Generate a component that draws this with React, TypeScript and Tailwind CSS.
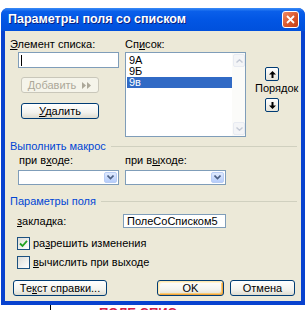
import type { ReactNode } from "react";

function Btn({
  children,
  className = "",
  disabled,
  isDefault,
}: {
  children: ReactNode;
  className?: string;
  disabled?: boolean;
  isDefault?: boolean;
}) {
  return (
    <div
      className={
        "flex items-center justify-center rounded-[3px] border " +
        (disabled
          ? "border-[#c9c7ba] bg-[#f5f4ea] text-[#aca899] "
          : "border-[#003c74] bg-[linear-gradient(to_bottom,#ffffff,#f3f3ee_60%,#dedcd0)] text-black ") +
        (isDefault
          ? "shadow-[inset_1px_1px_0_#fde7b0,inset_-1px_-1px_0_#f0a43c,inset_2px_2px_0_#fff3d4,inset_-2px_-2px_0_#f8cb78] "
          : "") +
        className
      }
    >
      {children}
    </div>
  );
}

function OrderButton({ down }: { down?: boolean }) {
  return (
    <div className="flex h-[14px] w-[14px] items-center justify-center rounded-[2px] border border-[#003c74] bg-[linear-gradient(to_bottom,#ffffff,#e6e4da)]">
      <svg width="7" height="7" viewBox="0 0 7 7" className={down ? "rotate-180" : ""}>
        <path d="M3.5 0 L7 3.5 L4.5 3.5 L4.5 7 L2.5 7 L2.5 3.5 L0 3.5 Z" fill="#000" />
      </svg>
    </div>
  );
}

function Combo() {
  return (
    <div className="flex h-[15px] w-[101px] border border-[#7f9db9] bg-white">
      <div className="flex-1" />
      <div className="m-px flex w-[13px] items-center justify-center rounded-[2px] border border-[#b9cdf5] bg-[linear-gradient(to_bottom,#e0eafd,#b6cdfb)]">
        <svg width="7" height="5" viewBox="0 0 7 5">
          <path d="M0.5 0.5 L3.5 3.5 L6.5 0.5" stroke="#4d6185" strokeWidth="1.6" fill="none" />
        </svg>
      </div>
    </div>
  );
}

function GroupHeader({ children, className = "" }: { children: ReactNode; className?: string }) {
  return (
    <div className={"flex items-center gap-[5px] " + className}>
      <span className="text-[#0046d5]">{children}</span>
      <div className="h-px flex-1 bg-[#d0d0bf]" />
    </div>
  );
}

function CheckBox({ checked, children }: { checked?: boolean; children: ReactNode }) {
  return (
    <div className="ml-[7px] flex items-center gap-[3px]">
      <div className="flex h-[13px] w-[13px] items-center justify-center border border-[#1c5180] bg-[linear-gradient(135deg,#dcdcd7,#ffffff)]">
        {checked ? (
          <svg width="9" height="9" viewBox="0 0 9 9">
            <path d="M1 4.5 L3.5 7 L8 1.8" stroke="#21a121" strokeWidth="1.8" fill="none" />
          </svg>
        ) : null}
      </div>
      <span>{children}</span>
    </div>
  );
}

function ScrollArrow({ down }: { down?: boolean }) {
  return (
    <div className="flex h-[13px] w-[12px] items-center justify-center rounded-[2px] border border-[#e8ebf2] bg-[#f4f5f7]">
      <svg width="7" height="4" viewBox="0 0 7 4" className={down ? "" : "rotate-180"}>
        <path d="M0.5 0.5 L3.5 3.2 L6.5 0.5" stroke="#c4cad6" strokeWidth="1.4" fill="none" />
      </svg>
    </div>
  );
}

export default function App() {
  return (
    <div className="h-[310px] w-[307px] overflow-hidden bg-white font-['Liberation_Sans',Arial,sans-serif] text-[11px] leading-[13px] text-black">
      <div className="h-[8px]" />
      <div className="ml-[1px] flex w-[304px] flex-col overflow-hidden rounded-t-[7px] bg-[#0842cf]">
        {/* title bar */}
        <div className="flex h-[23px] items-center justify-between bg-[linear-gradient(to_bottom,#3a8cf6_0%,#0a5fea_15%,#0256e4_50%,#0050dc_100%)] pl-[7px] pr-[6px]">
          <span className="text-[12.5px] font-bold text-white [text-shadow:1px_1px_0_#0a1f80]">
            Параметры поля со списком
          </span>
          <div className="flex h-[17px] w-[17px] items-center justify-center rounded-[3px] border border-white bg-[linear-gradient(135deg,#f08a66,#d9562c_55%,#c23e18)]">
            <svg width="9" height="9" viewBox="0 0 9 9">
              <path d="M1 1 L8 8 M8 1 L1 8" stroke="#fff" strokeWidth="1.8" />
            </svg>
          </div>
        </div>

        {/* body */}
        <div className="mx-[4px] mb-[4px] bg-[#ece9d8] pb-[5px] pl-[5px] pr-[4px] pt-[7px]">
          <div className="flex">
            <div className="flex w-[115px] flex-col">
              <span>
                <span className="underline">Э</span>лемент списка:
              </span>
              <div className="ml-[8px] mt-px flex h-[16px] w-[101px] items-center border border-[#7f9db9] bg-white pl-[2px]">
                <div className="h-[11px] w-px bg-black" />
              </div>
              <Btn disabled className="ml-[11px] mt-[9px] h-[16px] w-[78px] gap-[6px]">
                <span>Добавить</span>
                <svg width="10" height="7" viewBox="0 0 10 7">
                  <path d="M0 0 L4 3.5 L0 7 Z M5 0 L9 3.5 L5 7 Z" fill="#aca899" />
                </svg>
              </Btn>
              <Btn className="ml-[11px] mt-[10px] h-[16px] w-[78px]">
                <span>
                  <span className="underline">У</span>далить
                </span>
              </Btn>
            </div>

            <div className="flex w-[121px] flex-col">
              <span>
                Сп<span className="underline">и</span>сок:
              </span>
              <div className="mt-px flex h-[85px] border border-[#7f9db9] bg-white">
                <div className="flex flex-1 flex-col pl-px pt-[2px]">
                  <div className="h-[11px] pl-[2px] leading-[11px]">9А</div>
                  <div className="h-[11px] pl-[2px] leading-[11px]">9Б</div>
                  <div className="h-[11px] bg-[#316ac5] pl-[2px] leading-[11px] text-white">9в</div>
                </div>
                <div className="flex w-[13px] flex-col justify-between bg-[#fbfbf9] p-px">
                  <ScrollArrow />
                  <ScrollArrow down />
                </div>
              </div>
            </div>

            <div className="ml-[9px] flex w-[41px] flex-col">
              <div className="ml-[10px] mt-[29px]">
                <OrderButton />
              </div>
              <span className="mt-px">Порядок</span>
              <div className="ml-[10px] mt-[3px]">
                <OrderButton down />
              </div>
            </div>
          </div>

          <GroupHeader className="mt-[3px]">Выполнить макрос</GroupHeader>
          <div className="ml-[8px] mt-px flex">
            <div className="flex w-[107px] flex-col">
              <span className="pl-px">
                при в<span className="underline">х</span>оде:
              </span>
              <div className="mt-[3px]">
                <Combo />
              </div>
            </div>
            <div className="flex w-[101px] flex-col">
              <span>
                при в<span className="underline">ы</span>ходе:
              </span>
              <div className="mt-[3px]">
                <Combo />
              </div>
            </div>
          </div>

          <GroupHeader className="mt-[10px]">Параметры поля</GroupHeader>
          <div className="mt-[6px] flex items-center">
            <span className="ml-[7px] w-[106px]">
              <span className="underline">з</span>акладка:
            </span>
            <div className="flex h-[14px] w-[103px] items-center border border-[#7f9db9] bg-white pl-[3px]">
              ПолеСоСписком5
            </div>
          </div>
          <div className="mt-[9px]">
            <CheckBox checked>
              ра<span className="underline">з</span>решить изменения
            </CheckBox>
          </div>
          <div className="mt-[6px]">
            <CheckBox>
              <span className="underline">в</span>ычислить при выходе
            </CheckBox>
          </div>

          <div className="mt-[11px] flex">
            <Btn className="ml-[3px] h-[16px] w-[94px]">
              <span>
                Те<span className="underline">к</span>ст справки...
              </span>
            </Btn>
            <Btn isDefault className="ml-[50px] h-[16px] w-[67px]">
              OK
            </Btn>
            <Btn className="ml-[6px] h-[16px] w-[65px]">Отмена</Btn>
          </div>
        </div>
      </div>

      <div className="flex h-[5px] overflow-hidden">
        <div className="ml-[50px] h-full w-px bg-black" />
        <span className="ml-[48px] mt-px text-[13px] font-bold leading-[13px] text-[#d4204a]">ПОЛЕ СПИС</span>
      </div>
    </div>
  );
}
